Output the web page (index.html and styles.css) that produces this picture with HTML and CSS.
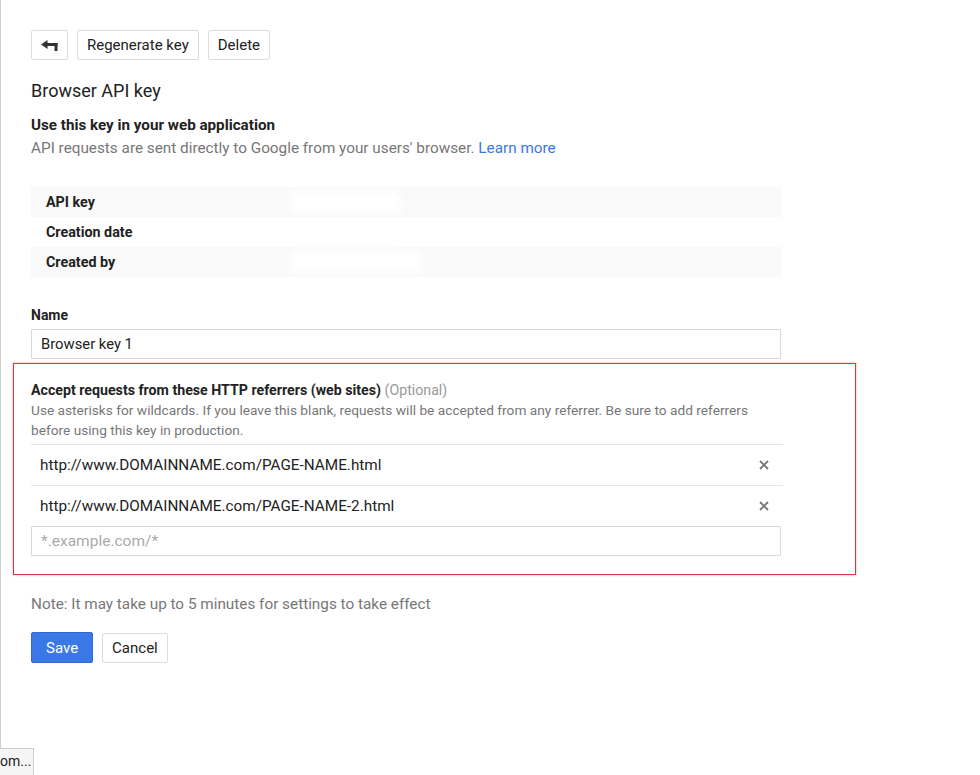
FILE: index.html
```html
<!DOCTYPE html>
<html lang="en">
<head>
    <meta charset="UTF-8">
    <title>Browser API key</title>
    <link rel="stylesheet" href="styles.css">
</head>
<body>
<div class="page">
    <div class="toolbar">
        <button class="btn btn-back" type="button">
            <svg width="18" height="11" viewBox="0 0 18 11">
                <polygon points="0,4.5 6.5,0 6.5,9" fill="#333"/>
                <rect x="6" y="3" width="10.5" height="3" fill="#333"/>
                <rect x="13.5" y="3" width="3" height="8" fill="#333"/>
            </svg>
        </button>
        <button class="btn" type="button">Regenerate key</button>
        <button class="btn" type="button">Delete</button>
    </div>

    <h1 class="title">Browser API key</h1>
    <div class="lead">Use this key in your web application</div>
    <div class="desc">API requests are sent directly to Google from your users' browser. <a href="javascript:;">Learn more</a></div>

    <div class="info">
        <div class="info-row"><span class="info-label">API key</span><span class="smudge"></span></div>
        <div class="info-row"><span class="info-label">Creation date</span><span class="smudge"></span></div>
        <div class="info-row"><span class="info-label">Created by</span><span class="smudge wide"></span></div>
    </div>

    <label class="field-label">Name</label>
    <input class="text-input" type="text" value="Browser key 1">

    <div class="referrers">
        <div class="ref-title">Accept requests from these HTTP referrers (web sites) <span class="optional">(Optional)</span></div>
        <div class="ref-help">Use asterisks for wildcards. If you leave this blank, requests will be accepted from any referrer. Be sure to add referrers before using this key in production.</div>
        <ul class="ref-list">
            <li>
                <span>http://www.DOMAINNAME.com/PAGE-NAME.html</span>
                <svg class="remove" width="10" height="10" viewBox="0 0 10 10"><path d="M1 1L9 9M9 1L1 9" stroke="#777" stroke-width="1.8"/></svg>
            </li>
            <li>
                <span>http://www.DOMAINNAME.com/PAGE-NAME-2.html</span>
                <svg class="remove" width="10" height="10" viewBox="0 0 10 10"><path d="M1 1L9 9M9 1L1 9" stroke="#777" stroke-width="1.8"/></svg>
            </li>
        </ul>
        <input class="text-input new-ref" type="text" placeholder="*.example.com/*">
    </div>

    <div class="note">Note: It may take up to 5 minutes for settings to take effect</div>

    <div class="actions">
        <button class="btn btn-primary" type="button">Save</button>
        <button class="btn" type="button">Cancel</button>
    </div>
</div>
<div class="status">om...</div>
</body>
</html>
```

FILE: styles.css
```css
*{
    margin: 0;
    padding: 0;
    box-sizing: border-box;
}
body{
    font-family: Roboto, "Liberation Sans", Arial, sans-serif;
    font-size: 15.3px;
    color: #222;
    background: #fff;
}
.page{
    border-left: 1px solid #cfcfcf;
    min-height: 775px;
    padding: 30px 0 0 30px;
    width: 781px;
}
.toolbar{
    display: flex;
    gap: 9px;
}
.btn{
    font-family: inherit;
    font-size: 15px;
    color: #222;
    height: 30px;
    padding: 0 9px;
    background: #fff;
    border: 1px solid #dcdcdc;
    border-radius: 2px;
}
.btn-back{
    width: 37px;
    display: flex;
    align-items: center;
    justify-content: center;
    padding: 0;
}
.title{
    font-size: 18px;
    font-weight: normal;
    line-height: 24px;
    margin-top: 19px;
    color: #222;
}
.lead{
    font-size: 15.2px;
    font-weight: bold;
    line-height: 22px;
    margin-top: 11px;
}
.desc{
    color: #777;
    line-height: 22px;
    margin-top: 1px;
}
.desc a{
    color: #3b78e7;
    text-decoration: none;
}
.info{
    margin-top: 28px;
}
.info-row{
    display: flex;
    align-items: center;
    height: 30px;
    padding-left: 15px;
    font-size: 14.3px;
    font-weight: bold;
}
.info-row:nth-child(odd){
    background: #f9f9f9;
}
.info-label{
    width: 245px;
}
.smudge{
    width: 110px;
    height: 22px;
    background: #fff;
    filter: blur(5px);
}
.smudge.wide{
    width: 130px;
}
.field-label{
    display: block;
    font-size: 14px;
    font-weight: bold;
    line-height: 20px;
    margin-top: 28px;
}
.text-input{
    display: block;
    width: 750px;
    height: 30px;
    margin-top: 4px;
    padding: 0 9px;
    border: 1px solid #d9d9d9;
    border-radius: 1px;
    font-family: inherit;
    font-size: 14.8px;
    color: #222;
}
.text-input::placeholder{
    color: #aaa;
}
.referrers{
    margin: 4px 0 0 -18px;
    width: 843px;
    height: 212px;
    padding: 16px 0 0 17px;
    border: 1px solid #d8383e;
    box-shadow: 0 0 2px rgba(216, 56, 62, 0.5);
}
.ref-title{
    font-size: 14.2px;
    font-weight: bold;
    line-height: 20px;
}
.optional{
    font-weight: normal;
    font-size: 14.2px;
    color: #999;
}
.ref-help{
    font-size: 13.7px;
    color: #777;
    line-height: 20px;
    width: 740px;
}
.ref-list{
    list-style: none;
    margin-top: 4px;
    width: 752px;
}
.ref-list li{
    display: flex;
    align-items: center;
    justify-content: space-between;
    height: 41px;
    padding: 0 14px 0 9px;
    border-top: 1px solid #e5e5e5;
}
.text-input.new-ref{
    margin-top: 0;
    font-size: 15.5px;
}
.note{
    color: #777;
    line-height: 20px;
    margin-top: 19px;
}
.actions{
    display: flex;
    align-items: center;
    gap: 9px;
    margin-top: 18px;
}
.btn-primary{
    height: 31px;
    padding: 0 14px;
    background: #3b78e7;
    border-color: #3367d6;
    color: #fff;
}
.status{
    position: fixed;
    left: 0;
    bottom: 0;
    width: 34px;
    height: 27px;
    line-height: 25px;
    overflow: hidden;
    white-space: nowrap;
    font-size: 14px;
    color: #222;
    background: #f5f5f5;
    border: 1px solid #cfcfcf;
    border-left: none;
    border-bottom: none;
}
```
